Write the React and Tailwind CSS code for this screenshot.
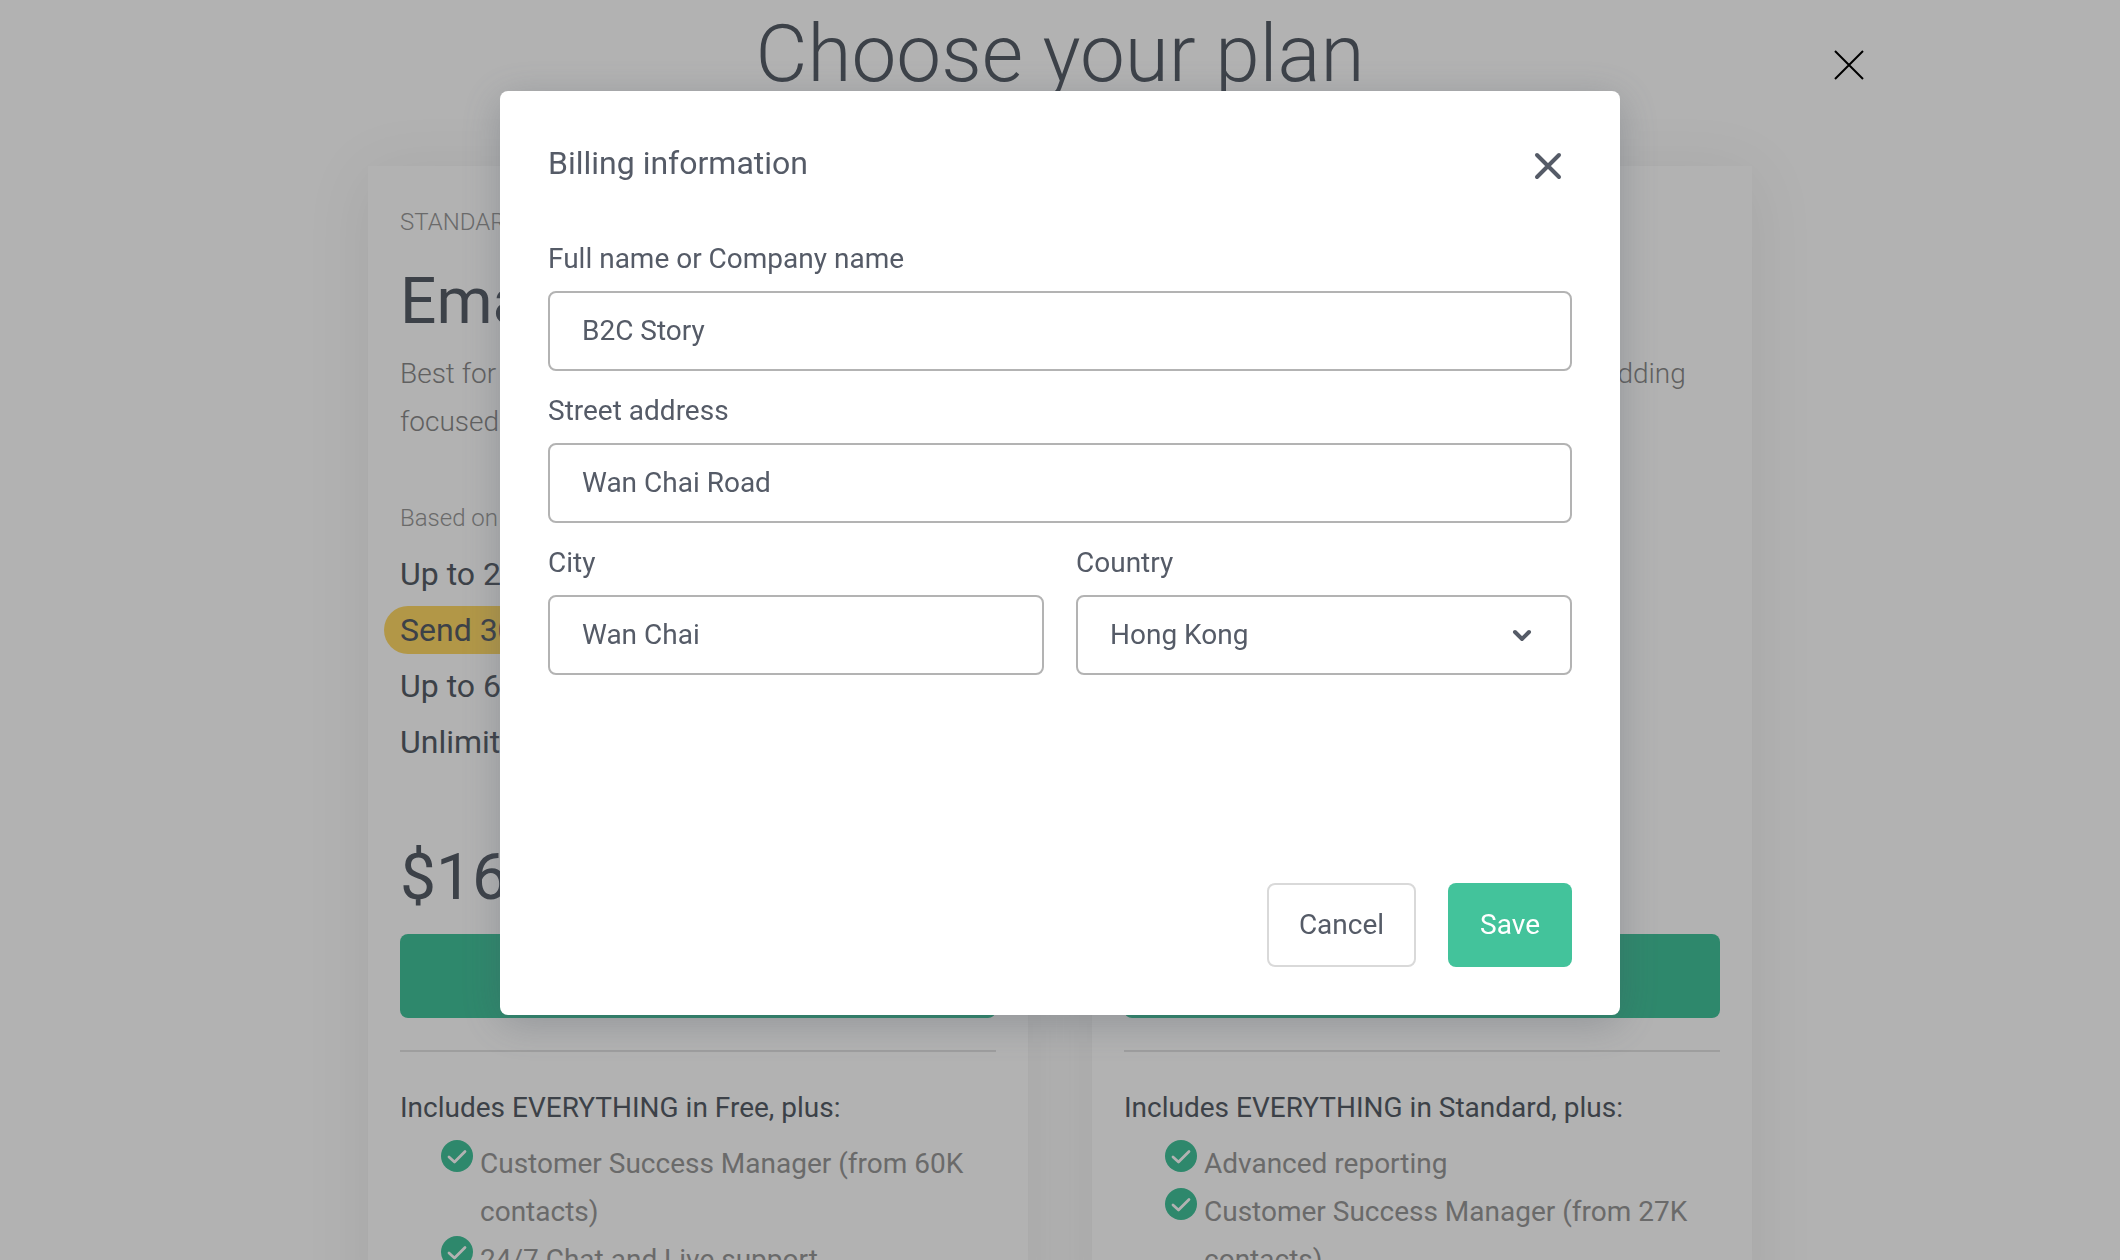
const plans = [
  {
    tier: "STANDARD",
    name: "Email marketing",
    summary: ["Best for ecommerce marketers", "focused on growing with email"],
    limits: ["Up to 20,000 contacts", "Send 300,000 emails/month", "Up to 60 SMS", "Unlimited web push"],
    price: "$160",
    includes: "Includes EVERYTHING in Free, plus:",
    features: ["Customer Success Manager (from 60K contacts)", "24/7 Chat and Live support"],
  },
  {
    tier: "PRO",
    name: "Omnichannel",
    summary: ["Best for large-volume email marketers, adding", "SMS to their marketing"],
    limits: ["Up to 20,000 contacts", "Unlimited emails", "Up to 3,000 SMS", "Unlimited web push"],
    price: "$400",
    includes: "Includes EVERYTHING in Standard, plus:",
    features: ["Advanced reporting", "Customer Success Manager (from 27K contacts)"],
  },
];

function CheckIcon() {
  return (
    <svg viewBox="0 0 32 32" className="h-8 w-8 shrink-0" aria-hidden="true">
      <circle cx="16" cy="16" r="16" fill="#43c39b" />
      <path
        d="M8 17l5.5 5L24 11.5"
        fill="none"
        stroke="#fff"
        strokeWidth="2.75"
        strokeLinecap="round"
        strokeLinejoin="round"
      />
    </svg>
  );
}

function PlanCard({ plan, highlighted }) {
  return (
    <section className="min-w-0 flex-1 bg-white p-8 shadow-[0_8px_64px_rgba(0,0,0,0.08)]">
      <p className="text-[24px] leading-[48px] font-light text-[#999]">{plan.tier}</p>
      <h2 className="mt-4 text-[64px] leading-[80px] text-[#575e68]">{plan.name}</h2>
      <p className="mt-2 text-[28px] leading-[48px] font-light text-[#8a8a8a]">
        {plan.summary[0]}
        <br />
        {plan.summary[1]}
      </p>
      <p className="mt-12 text-[24px] leading-[48px] font-light text-[#999]">Based on your contacts</p>
      <ul className="mt-1 text-[32px] text-[#575e68]">
        {plan.limits.map((limit, i) => (
          <li key={limit} className="flex py-1 leading-[48px]">
            <span className={highlighted === i ? "-ml-4 rounded-full bg-[#ffd966] px-4" : ""}>{limit}</span>
          </li>
        ))}
      </ul>
      <p className="mt-16 text-[64px] leading-[88px] text-[#575e68]">{plan.price}</p>
      <button type="button" className="mt-3 block h-[84px] w-full rounded-lg bg-[#43c39b] text-[28px] text-white">
        Choose plan
      </button>
      <hr className="mt-8 border-t-2 border-[#e2e2e2]" />
      <h3 className="mt-8 text-[28px] leading-[48px] text-[#575e68]">{plan.includes}</h3>
      <ul className="mt-2 pl-[41px] text-[28px] leading-[48px] text-[#999]">
        {plan.features.map((feature) => (
          <li key={feature} className="flex gap-[7px]">
            <CheckIcon />
            {feature}
          </li>
        ))}
      </ul>
    </section>
  );
}

const controlClass =
  "h-20 w-full appearance-none rounded-lg border-2 border-[#b3b3b3] bg-white px-8 text-[28px] text-[#555b67] outline-none";

function Field({ id, label, children }) {
  return (
    <div className="min-w-0 flex-1">
      <label htmlFor={id} className="mb-3 block text-[28px] leading-10">
        {label}
      </label>
      {children}
    </div>
  );
}

function TextField({ id, label, value }) {
  return (
    <Field id={id} label={label}>
      <input id={id} type="text" defaultValue={value} className={`${controlClass} pb-0.5`} />
    </Field>
  );
}

function BillingDialog() {
  return (
    <div className="fixed inset-0 flex items-start justify-center bg-black/30 pt-[91px]">
      <div
        role="dialog"
        aria-modal="true"
        aria-labelledby="billing-title"
        className="w-full max-w-[1120px] rounded-lg bg-white p-12 text-[#555b67] shadow-[0_8px_40px_rgba(66,75,90,0.3)]"
      >
        <div className="flex h-12 justify-between">
          <h2 id="billing-title" className="text-[32px] leading-[48px]">
            Billing information
          </h2>
          <button type="button" aria-label="Close dialog" className="flex h-12 w-12 items-center justify-center pt-1.5">
            <svg
              viewBox="0 0 28 28"
              className="h-7 w-7 shrink-0"
              fill="none"
              stroke="currentColor"
              strokeWidth="4"
              strokeLinecap="round"
            >
              <path d="M3 3l22 22M25 3L3 25" />
            </svg>
          </button>
        </div>
        <form className="mt-13">
          <div className="flex flex-col gap-5">
            <TextField id="name" label="Full name or Company name" value="B2C Story" />
            <TextField id="street" label="Street address" value="Wan Chai Road" />
            <div className="flex gap-8">
              <TextField id="city" label="City" value="Wan Chai" />
              <Field id="country" label="Country">
                <div className="relative">
                  <select id="country" defaultValue="Hong Kong" className={controlClass}>
                    <option>Hong Kong</option>
                  </select>
                  <svg
                    viewBox="0 0 20 14"
                    className="pointer-events-none absolute top-8 right-10 h-3.5 w-5"
                    fill="none"
                    stroke="currentColor"
                    strokeWidth="4"
                    strokeLinecap="round"
                  >
                    <path d="M3 5l7 7 7-7" />
                  </svg>
                </div>
              </Field>
            </div>
          </div>
          <div className="mt-52 flex justify-end gap-8 text-[28px]">
            <button type="button" className="h-[84px] rounded-lg border-2 border-[#d9d9d9] bg-white px-[30px]">
              Cancel
            </button>
            <button type="button" className="h-[84px] rounded-lg bg-[#43c39b] px-8 text-white">
              Save
            </button>
          </div>
        </form>
      </div>
    </div>
  );
}

export default function App() {
  return (
    <div className="h-screen overflow-hidden bg-white font-['Roboto',sans-serif]">
      <header className="relative mx-auto max-w-[1612px] pt-1.5">
        <h1 className="text-center text-[80px] leading-[96px] font-light text-[#575e68]">Choose your plan</h1>
        <button type="button" aria-label="Close" className="absolute top-12 right-0 p-0.5">
          <svg viewBox="0 0 30 30" className="h-[30px] w-[30px]" fill="none" stroke="#000" strokeWidth="2">
            <path d="M1 1l28 28M29 1L1 29" />
          </svg>
        </button>
      </header>
      <main className="mx-auto mt-16 flex max-w-[1384px] gap-16">
        <PlanCard plan={plans[0]} highlighted={1} />
        <PlanCard plan={plans[1]} />
      </main>
      <BillingDialog />
    </div>
  );
}
